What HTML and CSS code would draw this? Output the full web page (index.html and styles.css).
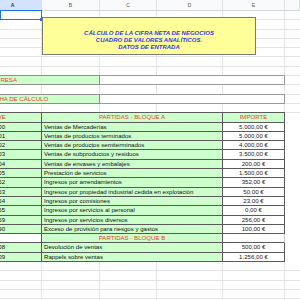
FILE: index.html
```html
<!DOCTYPE html>
<html lang="es">
<head>
<meta charset="utf-8">
<title>Cálculo de la cifra neta de negocios</title>
<link rel="stylesheet" href="styles.css">
</head>
<body>
<div class="app">
  <div class="colhead">
    <div class="ch ch-a sel">A</div>
    <div class="ch ch-b">B</div>
    <div class="ch ch-c">C</div>
    <div class="ch ch-d">D</div>
    <div class="ch ch-e">E</div>
    <div class="ch ch-f"></div>
  </div>
  <div class="sheet">
    <div class="titlebox">
      <div>CÁLCULO DE LA CIFRA NETA DE NEGOCIOS</div>
      <div>CUADRO DE VALORES ANALÍTICOS.</div>
      <div>DATOS DE ENTRADA</div>
    </div>

    <div class="row"><div class="a1"><span class="handle"></span></div></div>
    <div class="row"></div>
    <div class="row"></div>
    <div class="row"></div>
    <div class="row"></div>
    <div class="row"></div>
    <div class="row"></div>
    <div class="row">
      <div class="lbl">EMPRESA</div>
      <div class="inp"></div>
    </div>
    <div class="row"></div>
    <div class="row">
      <div class="lbl">FECHA DE CÁLCULO</div>
      <div class="inp"></div>
    </div>
    <div class="row"></div>
    <div class="row data head">
      <div class="code"><span>CLAVE</span></div>
      <div class="desc center">PARTIDAS - BLOQUE A</div>
      <div class="amt green">IMPORTE</div>
    </div>
    <div class="row data"><div class="code"><span>700</span></div><div class="desc">Ventas de Mercaderías</div><div class="amt">5.000,00 €</div></div>
    <div class="row data"><div class="code"><span>701</span></div><div class="desc">Ventas de productos terminados</div><div class="amt">5.000,00 €</div></div>
    <div class="row data"><div class="code"><span>702</span></div><div class="desc">Ventas de productos semiterminados</div><div class="amt">4.000,00 €</div></div>
    <div class="row data"><div class="code"><span>703</span></div><div class="desc">Ventas de subproductos y residuos</div><div class="amt">3.500,00 €</div></div>
    <div class="row data"><div class="code"><span>704</span></div><div class="desc">Ventas de envases y embalajes</div><div class="amt">200,00 €</div></div>
    <div class="row data"><div class="code"><span>705</span></div><div class="desc">Prestación de servicios</div><div class="amt">1.500,00 €</div></div>
    <div class="row data"><div class="code"><span>752</span></div><div class="desc">Ingresos por arrendamientos</div><div class="amt">352,00 €</div></div>
    <div class="row data"><div class="code"><span>753</span></div><div class="desc">Ingresos por propiedad industrial cedida en explotación</div><div class="amt">50,00 €</div></div>
    <div class="row data"><div class="code"><span>754</span></div><div class="desc">Ingresos por comisiones</div><div class="amt">23,00 €</div></div>
    <div class="row data"><div class="code"><span>755</span></div><div class="desc">Ingresos por servicios al personal</div><div class="amt">0,00 €</div></div>
    <div class="row data"><div class="code"><span>759</span></div><div class="desc">Ingresos por servicios diversos</div><div class="amt">256,00 €</div></div>
    <div class="row data"><div class="code"><span>790</span></div><div class="desc">Exceso de provisión para riesgos y gastos</div><div class="amt">100,00 €</div></div>
    <div class="row data headb">
      <div class="code blank"></div>
      <div class="desc center">PARTIDAS - BLOQUE B</div>
      <div class="amt blank"></div>
    </div>
    <div class="row data"><div class="code"><span>708</span></div><div class="desc">Devolución de ventas</div><div class="amt">500,00 €</div></div>
    <div class="row data last"><div class="code"><span>709</span></div><div class="desc">Rappels sobre ventas</div><div class="amt">1.256,00 €</div></div>
    <div class="row"></div>
    <div class="row"></div>
    <div class="row"></div>
    <div class="row"></div>
  </div>
</div>
</body>
</html>
```

FILE: styles.css
```css
* { box-sizing: border-box; }
html, body {
  margin: 0;
  padding: 0;
  background: #fff;
  width: 300px;
  height: 300px;
  overflow: hidden;
}
.app {
  width: 300px;
  height: 300px;
  overflow: hidden;
  font-family: "Liberation Sans", Arial, sans-serif;
  font-size: 6.1px;
  color: #111;
}
.colhead {
  display: grid;
  grid-template-columns: 42px 58px 57px 66px 62px 15px;
  height: 11px;
  background: #f8f9fa;
  border-bottom: 1px solid #d6d6d6;
}
.ch {
  font-size: 5px;
  line-height: 10px;
  text-align: center;
  color: #555;
  border-right: 1px solid #e0e0e0;
}
.ch.sel {
  background: #d3e3fd;
  color: #1f3a6e;
  font-weight: bold;
  padding-right: 16px;
}
.sheet {
  position: relative;
  display: flex;
  flex-direction: column;
  background-image:
    linear-gradient(#e3e3e3, #e3e3e3),
    linear-gradient(#e3e3e3, #e3e3e3),
    linear-gradient(#e3e3e3, #e3e3e3),
    linear-gradient(#e3e3e3, #e3e3e3),
    linear-gradient(#e3e3e3, #e3e3e3);
  background-size: 1px 100%;
  background-repeat: no-repeat;
  background-position: 41px 0, 99px 0, 156px 0, 222px 0, 284px 0;
}
.row {
  height: 9.3px;
  flex: none;
  display: grid;
  grid-template-columns: 42px 58px 57px 66px 62px 15px;
  border-bottom: 1px solid #e3e3e3;
  line-height: 8.3px;
}
.a1 {
  grid-column: 1;
  position: relative;
  border: 1px solid #1a73e8;
  margin-top: -1px;
  height: 10.3px;
}
.handle {
  position: absolute;
  right: -2px;
  bottom: -2px;
  width: 3px;
  height: 3px;
  background: #1a73e8;
}
.titlebox {
  position: absolute;
  left: 42px;
  top: 5.7px;
  width: 214px;
  height: 38.5px;
  background: #ffff99;
  border: 1px solid #7a7a7a;
  color: #3535e6;
  font-weight: bold;
  font-style: italic;
  font-size: 6px;
  line-height: 6.7px;
  text-align: center;
  padding-top: 12.5px;
  z-index: 2;
}
.lbl {
  grid-column: 1 / 3;
  background: #ccffcc;
  border: 1px solid #8f8f8f;
  border-left: none;
  color: #f03c2c;
  text-indent: -12.8px;
  overflow: hidden;
  white-space: nowrap;
  margin-top: -1px;
  height: 10.3px;
  line-height: 8.3px;
}
.inp {
  grid-column: 3 / 6;
  background: #fff;
  border: 1px solid #9a9a9a;
  border-left: none;
  margin-top: -1px;
  height: 10.3px;
}
.data {
  border-bottom: none;
}
.data > div {
  border-bottom: 1px solid #5a5a5a;
  border-right: 1px solid #5a5a5a;
  white-space: nowrap;
  overflow: hidden;
}
.head > div {
  border-top: 1px solid #5a5a5a;
  margin-top: -1px;
}
.code {
  grid-column: 1;
  background: #ccffcc;
  position: relative;
}
.code span {
  display: block;
  width: 88px;
  margin-left: -44px;
  text-align: center;
}
.head .code span {
  margin-left: -48px;
}
.desc {
  grid-column: 2 / 5;
  background: #ccffcc;
  padding-left: 2px;
}
.desc.center {
  text-align: center;
  padding-left: 0;
}
.amt {
  grid-column: 5;
  background: #fff;
  text-align: center;
  color: #222;
}
.head > div, .headb > div {
  color: #f03c2c;
}
.amt.green {
  background: #ccffcc;
}
.code.blank {
  background: #fff;
}
.headb .amt.blank {
  background: #fff;
  border-right-color: #c8c8c8;
}
```
